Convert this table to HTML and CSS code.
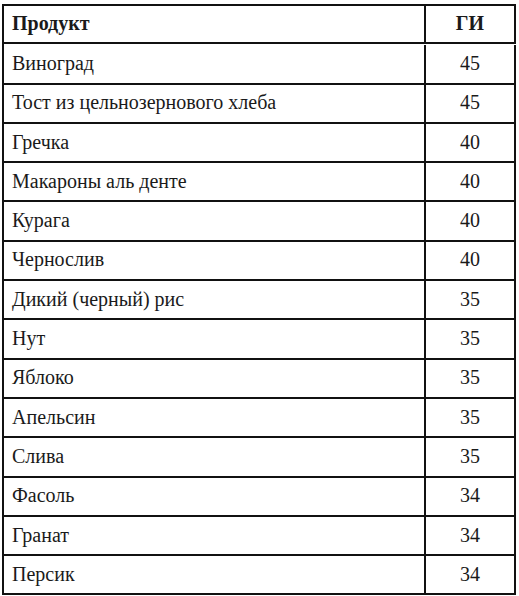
FILE: index.html
```html
<!DOCTYPE html>
<html>
<head>
<meta charset="utf-8">
<title>Гликемический индекс</title>
<link rel="stylesheet" href="styles.css">
</head>
<body>
<div class="grid" role="table">
  <div class="cell head" role="columnheader">Продукт</div>
  <div class="cell head num" role="columnheader">ГИ</div>

  <div class="cell">Виноград</div><div class="cell num">45</div>
  <div class="cell">Тост из цельнозернового хлеба</div><div class="cell num">45</div>
  <div class="cell">Гречка</div><div class="cell num">40</div>
  <div class="cell">Макароны аль денте</div><div class="cell num">40</div>
  <div class="cell">Курага</div><div class="cell num">40</div>
  <div class="cell">Чернослив</div><div class="cell num">40</div>
  <div class="cell">Дикий (черный) рис</div><div class="cell num">35</div>
  <div class="cell">Нут</div><div class="cell num">35</div>
  <div class="cell">Яблоко</div><div class="cell num">35</div>
  <div class="cell">Апельсин</div><div class="cell num">35</div>
  <div class="cell">Слива</div><div class="cell num">35</div>
  <div class="cell">Фасоль</div><div class="cell num">34</div>
  <div class="cell">Гранат</div><div class="cell num">34</div>
  <div class="cell">Персик</div><div class="cell num">34</div>
</div>
</body>
</html>
```
FILE: styles.css
```css
html, body {
  margin: 0;
  padding: 0;
  background: #ffffff;
}

.grid {
  margin: 4px 0 0 2px;
  width: 514px;
  box-sizing: border-box;
  display: grid;
  grid-template-columns: 1fr 90px;
  grid-auto-rows: 39.3px;
  border-top: 2px solid #111;
  border-left: 2px solid #111;
  font-family: "Liberation Serif";
  font-size: 20px;
  color: #1a1a1a;
}

.cell {
  box-sizing: border-box;
  display: flex;
  align-items: center;
  padding: 0 0 1px 8px;
  border-right: 2px solid #111;
  border-bottom: 2px solid #111;
  font-family: "Liberation Serif";
  white-space: nowrap;
}

.head {
  height: 38px;
  font-weight: bold;
}

.num {
  justify-content: center;
  padding-left: 0;
}
```
